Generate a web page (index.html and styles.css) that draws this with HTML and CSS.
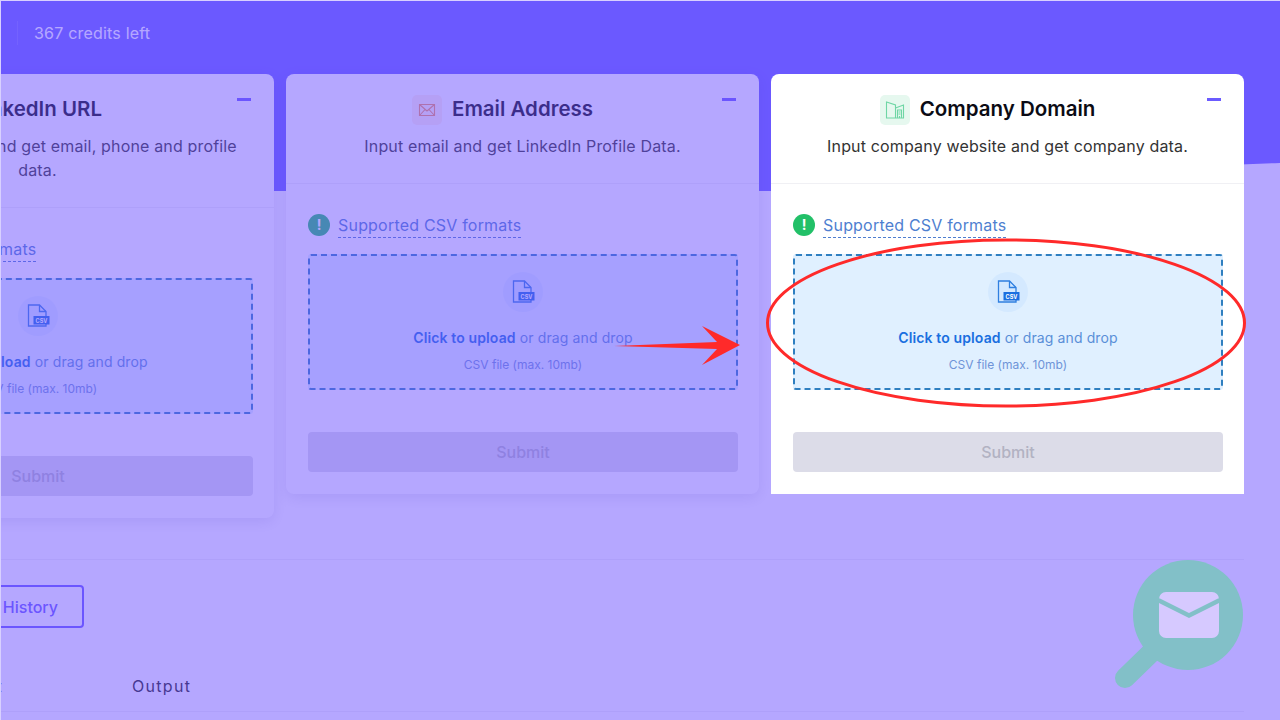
FILE: index.html
```html
<!DOCTYPE html>
<html lang="en">
<head>
  <meta charset="UTF-8">
  <meta name="viewport" content="width=device-width, initial-scale=1.0">
  <title>Bulk enrichment</title>
  <link rel="stylesheet" href="styles.css">
</head>
<body>
  <svg class="defs" width="0" height="0">
    <symbol id="file-csv" viewBox="0 0 24 24">
      <path d="M2.5 1h11l6.500 6.500V22H2.500z" fill="none" stroke="#2f7fe0" stroke-width="1.300"/>
      <path d="M13.500 1v6.500H20" fill="none" stroke="#2f7fe0" stroke-width="1.300"/>
      <rect x="7.500" y="12" width="16" height="8.500" fill="#1a6fe0"/>
      <text x="15.500" y="18.500" class="csv-tag" text-anchor="middle">CSV</text>
    </symbol>
  </svg>

  <div class="screen">
    <!-- purple band behind the top of the page -->
    <svg class="band" width="1280" height="200" viewBox="0 0 1280 200">
      <path d="M0 0H1280V163C1120 168 960 191 771 191H0z" fill="#6b62ff"/>
    </svg>

    <div class="topbar">
      <span class="credits">367 credits left</span>
    </div>

    <div class="main">
      <div class="cards">
        <div class="card">
          <div class="card-head">
            <span class="minus"></span>
            <div class="card-title">
              <span class="title-icon icon-blue">
                <svg width="18" height="18" viewBox="0 0 18 18"><rect x="2" y="2" width="14" height="14" rx="2" fill="none" stroke="#2f7fe0" stroke-width="1.200"/></svg>
              </span>
              <h3>LinkedIn URL</h3>
            </div>
            <p>Input LinkedIn URL and get email, phone and profile data.</p>
          </div>
          <div class="card-body">
            <div class="formats"><span class="info">!</span><a href="#">Supported CSV formats</a></div>
            <div class="dropzone">
              <span class="file-icon"><svg width="24" height="24"><use href="#file-csv"/></svg></span>
              <div class="drop-text"><b>Click to upload</b> or drag and drop</div>
              <div class="drop-hint">CSV file (max. 10mb)</div>
            </div>
            <button class="submit">Submit</button>
          </div>
        </div>

        <div class="card">
          <div class="card-head">
            <span class="minus"></span>
            <div class="card-title">
              <span class="title-icon icon-orange">
                <svg width="18" height="18" viewBox="0 0 18 18"><path d="M1.500 3.500h15v11h-15zM1.500 3.500L9 10l7.500-6.500M1.500 14.500L7 8.500M16.500 14.500L11 8.500" fill="none" stroke="#f0935f" stroke-width="1.100"/></svg>
              </span>
              <h3>Email Address</h3>
            </div>
            <p>Input email and get LinkedIn Profile Data.</p>
          </div>
          <div class="card-body">
            <div class="formats"><span class="info">!</span><a href="#">Supported CSV formats</a></div>
            <div class="dropzone">
              <span class="file-icon"><svg width="24" height="24"><use href="#file-csv"/></svg></span>
              <div class="drop-text"><b>Click to upload</b> or drag and drop</div>
              <div class="drop-hint">CSV file (max. 10mb)</div>
            </div>
            <button class="submit">Submit</button>
          </div>
        </div>

        <div class="card card-focus">
          <div class="card-head">
            <span class="minus"></span>
            <div class="card-title">
              <span class="title-icon icon-green">
                <svg width="20" height="20" viewBox="0 0 20 20" fill="none" stroke="#6fd6a5" stroke-width="1.100"><path d="M1.500 18V2l9 3v13zM10.500 8l8-3v13h-17"/><path d="M12.500 18v-8h4v8M13.500 12h2M13.500 14h2M14.500 18v-2"/></svg>
              </span>
              <h3>Company Domain</h3>
            </div>
            <p>Input company website and get company data.</p>
          </div>
          <div class="card-body">
            <div class="formats"><span class="info">!</span><a href="#">Supported CSV formats</a></div>
            <div class="dropzone">
              <span class="file-icon"><svg width="24" height="24"><use href="#file-csv"/></svg></span>
              <div class="drop-text"><b>Click to upload</b> or drag and drop</div>
              <div class="drop-hint">CSV file (max. 10mb)</div>
            </div>
            <button class="submit">Submit</button>
          </div>
        </div>
      </div>

      <div class="history">
        <button class="history-btn">Upload History</button>
        <div class="table-head">
          <span class="col-input">Input</span>
          <span class="col-output">Output</span>
        </div>
      </div>
    </div>

    <!-- everything but the focused card sits under this -->
    <div class="dim"></div>

    <!-- red annotation drawn on the screenshot -->
    <svg class="marks" width="1280" height="720" viewBox="0 0 1280 720">
      <ellipse cx="1006" cy="323" rx="238.500" ry="83" fill="none" stroke="#ff2a2a" stroke-width="3"/>
      <path d="M614 346L717 342L702 326L740 345L702 365L717 349z" fill="#ff2a2a"/>
    </svg>

    <!-- logo watermark -->
    <svg class="badge" width="130" height="132" viewBox="0 0 130 132">
      <path d="M46 84L11 118" stroke="#82c0c8" stroke-width="20" stroke-linecap="round"/>
      <circle cx="74" cy="55" r="55" fill="#82c0c8"/>
      <path d="M45 39a7 7 0 0 1 7-7h46a7 7 0 0 1 7 7v-1L75 53L45 38z" fill="#d6c9ff"/>
      <path d="M45 43L75 58L105 43V71a7 7 0 0 1-7 7H52a7 7 0 0 1-7-7z" fill="#d6c9ff"/>
    </svg>
  </div>
</body>
</html>
```

FILE: styles.css
```css
* {
  box-sizing: border-box;
}

body {
  margin: 0;
  padding: 1px 0 0 1px;
  background: #d8d0ff;
  font-family: Inter, "Noto Sans", sans-serif;
  overflow: hidden;
}

.defs {
  position: absolute;
}

.csv-tag {
  font-family: Inter, sans-serif;
  font-size: 5.500px;
  font-weight: 700;
  fill: #fff;
}

.screen {
  position: relative;
  width: 1279px;
  height: 719px;
  overflow: hidden;
  background: #fff;
}

.band {
  position: absolute;
  top: -1px;
  left: -1px;
}

.dim {
  position: absolute;
  inset: 0;
  z-index: 1;
  background: rgba(108, 80, 255, 0.5);
}

.marks {
  position: absolute;
  top: -1px;
  left: -1px;
  z-index: 3;
}

.badge {
  position: absolute;
  left: 1113px;
  top: 559px;
  z-index: 3;
}

.topbar {
  position: relative;
  height: 73px;
  padding: 20px 0 0 16px;
}

.credits {
  display: block;
  height: 24px;
  padding-left: 16px;
  border-left: 1px solid rgba(255, 255, 255, 0.12);
  color: #fff;
  font-size: 16px;
  letter-spacing: 0.2px;
  line-height: 24px;
}

.main {
  position: relative;
  width: 1443px;
  margin-left: -200px;
}

.cards {
  display: flex;
  align-items: flex-start;
  gap: 12px;
}

.card {
  flex: 0 0 473px;
  background: #fff;
  border-radius: 8px;
  box-shadow: 0 4px 14px rgba(40, 30, 120, 0.12);
}

.card-focus {
  position: relative;
  z-index: 2;
  border-radius: 8px 8px 0 0;
  box-shadow: none;
}

.card-head {
  position: relative;
  padding: 21px 22px 25px;
  border-bottom: 1px solid #f0f0f4;
  text-align: center;
}

.card-head p {
  margin: 0;
  color: #333;
  font-size: 16px;
  letter-spacing: 0.16px;
  line-height: 24px;
}

.card-title {
  display: flex;
  justify-content: center;
  align-items: center;
  gap: 10px;
  height: 30px;
  margin-bottom: 9px;
  padding-right: 40px;
}

.card-title h3 {
  margin: 0;
  padding-bottom: 3px;
  color: #0b0b14;
  font-size: 20.500px;
  font-weight: 600;
}

.title-icon {
  display: flex;
  justify-content: center;
  align-items: center;
  width: 30px;
  height: 30px;
  border-radius: 5px;
}

.icon-blue {
  background: #e6f0ff;
}

.icon-orange {
  background: #fff0ea;
}

.icon-green {
  background: #e6f8ef;
}

.minus {
  position: absolute;
  top: 24px;
  right: 23px;
  width: 14px;
  height: 2.500px;
  background: #6b5bff;
}

.card-body {
  padding: 29px 21px 22px 22px;
}

.formats {
  display: flex;
  align-items: center;
  gap: 8px;
  height: 24px;
  margin-bottom: 17px;
}

.formats a {
  color: #4f7fd0;
  font-size: 16px;
  letter-spacing: 0.2px;
  line-height: 24px;
  text-decoration: none;
  border-bottom: 1px dashed #4f7fd0;
}

.info {
  width: 22px;
  height: 22px;
  border-radius: 50%;
  background: #22c068;
  color: #fff;
  font-size: 14px;
  font-weight: 700;
  line-height: 22px;
  text-align: center;
}

.dropzone {
  height: 136px;
  padding-top: 16px;
  border: 2px dashed #2f7fc0;
  border-radius: 3px;
  background: #e0f0ff;
  text-align: center;
}

.file-icon {
  display: flex;
  justify-content: center;
  align-items: center;
  width: 40px;
  height: 40px;
  margin: 0 auto 15px;
  border-radius: 50%;
  background: #d4e9ff;
}

.drop-text {
  color: #5a8fd8;
  font-size: 14px;
  letter-spacing: 0.12px;
  line-height: 22px;
}

.drop-text b {
  color: #1a6fe0;
  font-weight: 600;
}

.drop-hint {
  margin-top: 7px;
  color: #6f94d8;
  font-size: 12px;
  line-height: 18px;
}

.submit {
  display: block;
  width: 100%;
  height: 40px;
  margin-top: 42px;
  border: 0;
  border-radius: 4px;
  background: #dcdce8;
  color: #b2b2c2;
  font-family: inherit;
  font-size: 16px;
  font-weight: 500;
}

.history {
  margin-top: 41px;
  padding-top: 25px;
  border-top: 1px solid #f0f0f4;
}

.history-btn {
  display: block;
  width: 268px;
  height: 43px;
  margin-left: 15px;
  padding-right: 24px;
  border: 2px solid #6b5bff;
  border-radius: 4px;
  background: #fff;
  color: #6b5bff;
  font-family: inherit;
  font-size: 16px;
  font-weight: 500;
  text-align: right;
}

.table-head {
  display: flex;
  height: 84px;
  padding-top: 46px;
  border-bottom: 1px solid #f0f0f4;
  color: #222;
  font-size: 16px;
  font-weight: 400;
  letter-spacing: 1.300px;
  line-height: 24px;
}

.col-input {
  width: 331px;
  text-align: right;
  padding-right: 129px;
}
```
